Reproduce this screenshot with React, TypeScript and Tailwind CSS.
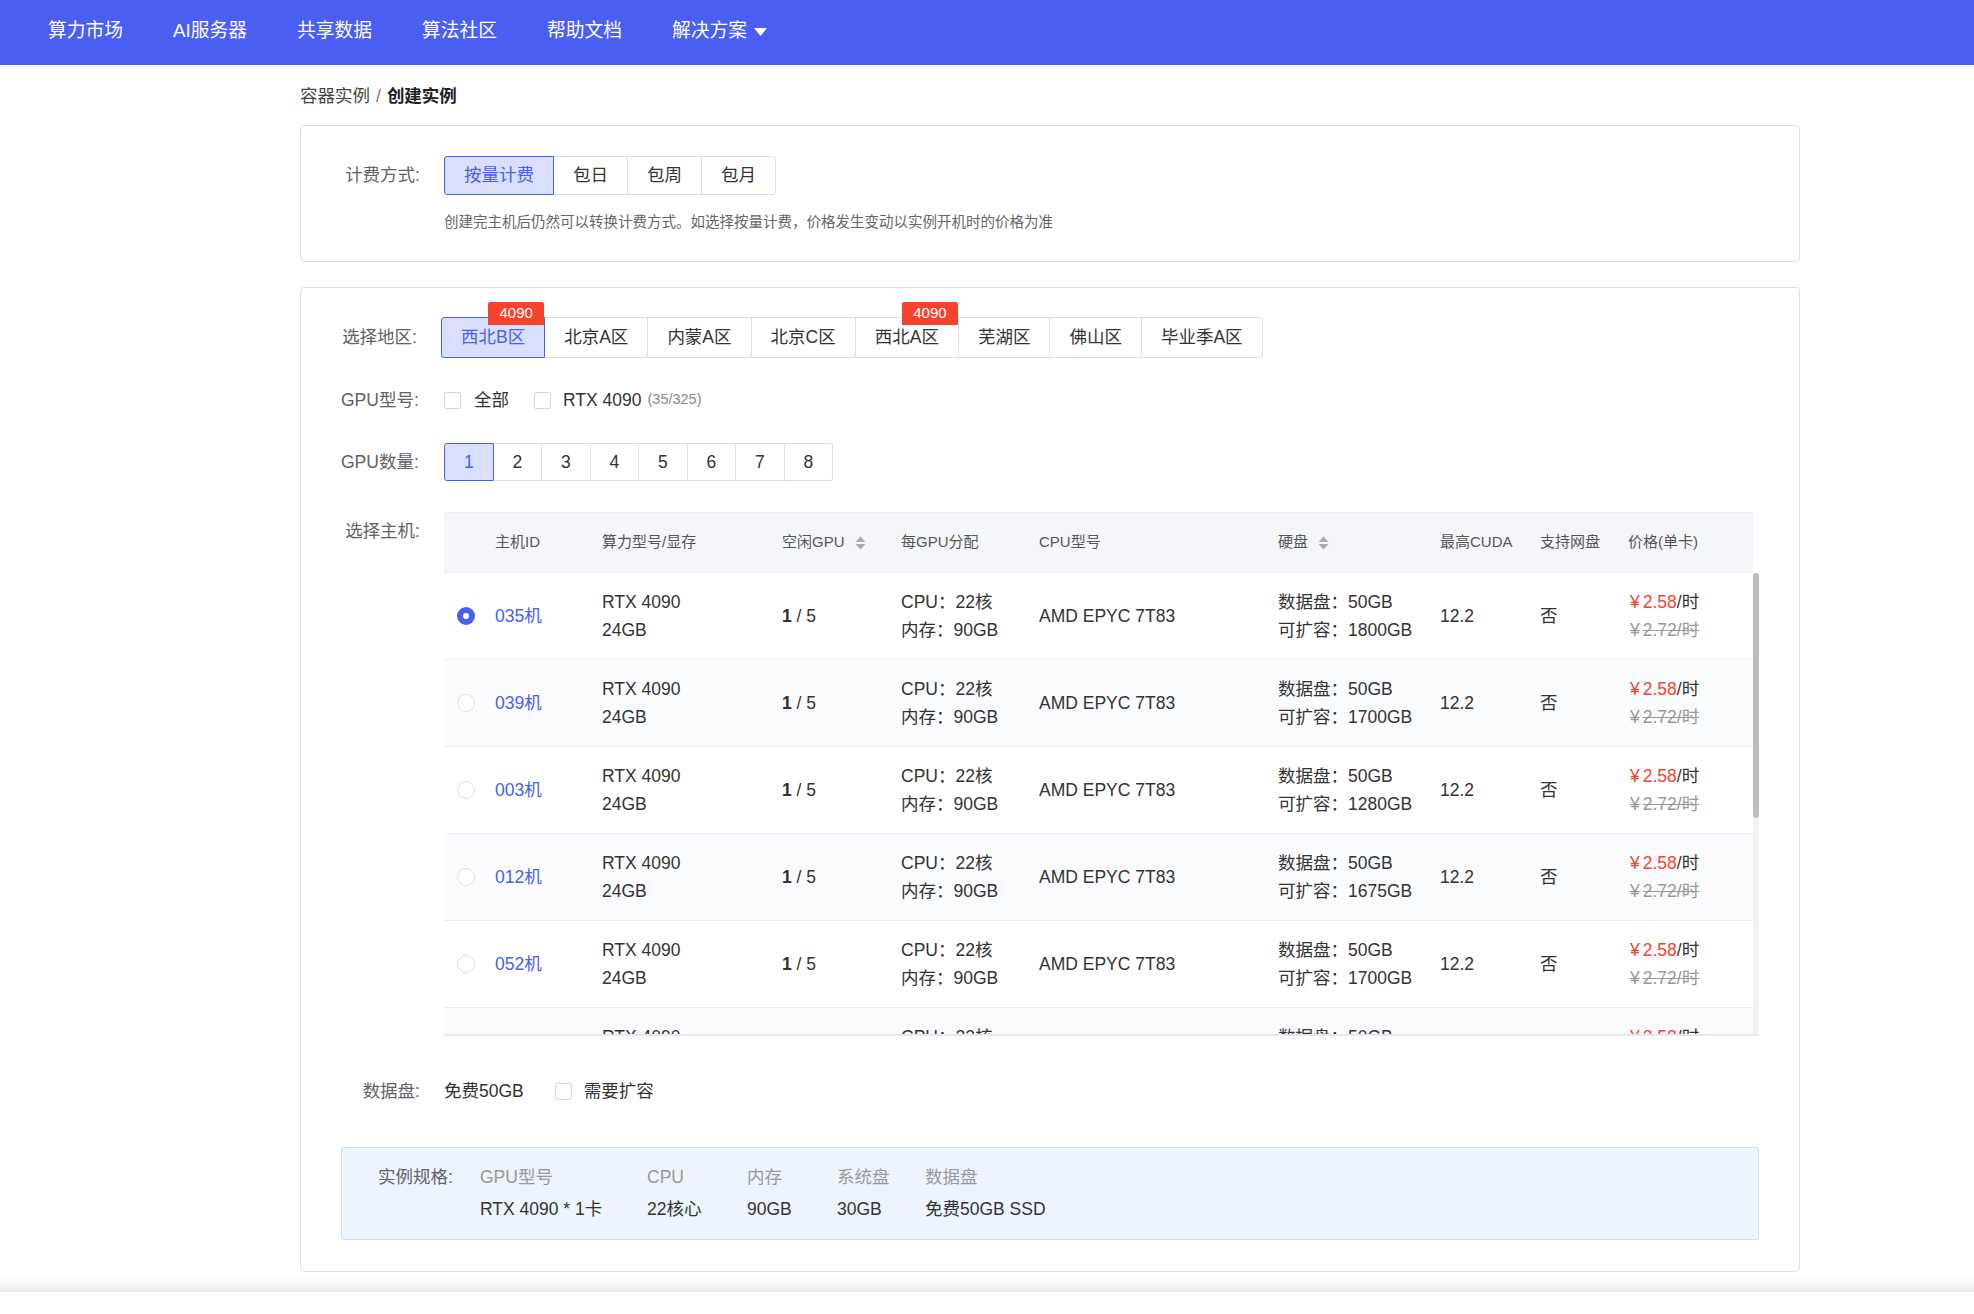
import React from "react";

const NAV = ["算力市场", "AI服务器", "共享数据", "算法社区", "帮助文档"];
const PAY = ["按量计费", "包日", "包周", "包月"];
const REGIONS = [
    { name: "西北B区", badge: true },
    { name: "北京A区" },
    { name: "内蒙A区" },
    { name: "北京C区" },
    { name: "西北A区", badge: true },
    { name: "芜湖区" },
    { name: "佛山区" },
    { name: "毕业季A区" },
];

const HOSTS = [
    { id: "035机", ext: "1800GB" },
    { id: "039机", ext: "1700GB" },
    { id: "003机", ext: "1280GB" },
    { id: "012机", ext: "1675GB" },
    { id: "052机", ext: "1700GB" },
    { id: "018机", ext: "1600GB" },
    { id: "027机", ext: "1500GB" },
];

const COLS = "grid grid-cols-[51px_107px_180px_119px_138px_239px_162px_100px_88px_125px]";
const SPEC = "grid grid-cols-[102px_167px_100px_90px_88px_1fr]";

function SortIcon() {
    return (
        <svg width="11" height="16" viewBox="0 0 11 16" className="ml-[10px]">
            <polygon points="0.5,7 5.5,1.5 10.5,7" fill="#a9abb0" />
            <polygon points="0.5,9 5.5,14.5 10.5,9" fill="#a9abb0" />
        </svg>
    );
}

function Checkbox() {
    return <span className="inline-block h-[17px] w-[17px] shrink-0 rounded-[2px] border border-[#d4d7de] bg-white" />;
}

function Radio({ on }: { on: boolean }) {
    return on ? (
        <span className="flex h-[18px] w-[18px] items-center justify-center rounded-full bg-[#4a5ef1]">
            <span className="h-[6px] w-[6px] rounded-full bg-white" />
        </span>
    ) : (
        <span className="block h-[18px] w-[18px] rounded-full border border-[#dcdfe6] bg-white" />
    );
}

export default function App() {
    return (
        <div className="min-h-[1314px] bg-white font-['Liberation_Sans','Noto_Sans_CJK_SC',sans-serif] text-[#333]">
            <nav className="flex h-[65px] items-center gap-[50px] bg-[#4a5ef1] pb-[2px] pl-[48px] text-[18.75px] text-white">
                {NAV.map((n) => (
                    <span key={n}>{n}</span>
                ))}
                <span className="flex items-center gap-[7px]">
                    解决方案
                    <svg width="13" height="8" viewBox="0 0 13 8">
                        <polygon points="0,0 13,0 6.5,8" fill="white" />
                    </svg>
                </span>
            </nav>

            <main className="ml-[300px] w-[1500px]">
                <div className="mt-[18px] h-[26px] text-[17.5px] leading-[26px]">
                    <span className="text-[#444]">容器实例</span>
                    <span className="mx-[6px] text-[#777]">/</span>
                    <span className="font-bold text-[#222]">创建实例</span>
                </div>

                <section className="mt-[16px] h-[137px] rounded-[4px] border border-[#dcdfe6] pt-[30px]">
                    <div className="flex items-center">
                        <div className="w-[119px] whitespace-nowrap text-right text-[17.5px] text-[#606266]">计费方式:</div>
                        <div className="ml-[24px] flex h-[39px]">
                            {PAY.map((p, i) => (
                                <span
                                    key={p}
                                    className={`flex items-center border px-[19px] text-[17.5px] ${i > 0 ? "-ml-px" : ""} ${i === 0 ? "z-10 rounded-l-[3px] border-[#4a5ef1] bg-[#dadffc] text-[#4a5ef1]" : "border-[#dcdfe6] bg-white"} ${i === PAY.length - 1 ? "rounded-r-[3px]" : ""}`}
                                >
                                    {p}
                                </span>
                            ))}
                        </div>
                    </div>
                    <p className="ml-[143px] mt-[17px] text-[14.5px] leading-[20px] text-[#666]">
                        创建完主机后仍然可以转换计费方式。如选择按量计费，价格发生变动以实例开机时的价格为准
                    </p>
                </section>

                <section className="mt-[25px] h-[985px] rounded-[4px] border border-[#dcdfe6] px-[40px] pt-[29px]">
                    <div className="flex items-center">
                        <div className="w-[76px] whitespace-nowrap text-right text-[17.5px] text-[#606266]">选择地区:</div>
                        <div className="ml-[24px] flex h-[41px]">
                            {REGIONS.map((r, i) => (
                                <span
                                    key={r.name}
                                    className={`relative flex items-center border px-[19px] text-[17.5px] ${i > 0 ? "-ml-px" : ""} ${i === 0 ? "z-10 rounded-l-[3px] border-[#4a5ef1] bg-[#dadffc] text-[#4a5ef1]" : "border-[#dcdfe6] bg-white"} ${i === REGIONS.length - 1 ? "rounded-r-[3px]" : ""}`}
                                >
                                    {r.name}
                                    {r.badge && (
                                        <span className="absolute right-0 top-[-16px] flex h-[23px] w-[56px] items-center justify-center rounded-t-[2px] bg-[#f4442e] text-[15px] text-white">
                                            4090
                                        </span>
                                    )}
                                </span>
                            ))}
                        </div>
                    </div>

                    <div className="mt-[30px] flex h-[24px] items-center">
                        <div className="w-[76px] whitespace-nowrap text-right text-[17.5px] text-[#606266]">GPU型号:</div>
                        <div className="ml-[27px] flex items-center text-[17.5px]">
                            <Checkbox />
                            <span className="ml-[13px]">全部</span>
                            <span className="ml-[25px] flex">
                                <Checkbox />
                            </span>
                            <span className="ml-[12px]">RTX 4090</span>
                            <span className="ml-[6px] text-[14.5px] text-[#888]">(35/325)</span>
                        </div>
                    </div>

                    <div className="mt-[31px] flex items-center">
                        <div className="w-[76px] whitespace-nowrap text-right text-[17.5px] text-[#606266]">GPU数量:</div>
                        <div className="ml-[27px] flex h-[38px]">
                            {[1, 2, 3, 4, 5, 6, 7, 8].map((n, i) => (
                                <span
                                    key={n}
                                    className={`flex w-[49.5px] items-center justify-center border text-[17.5px] ${i > 0 ? "-ml-px" : ""} ${i === 0 ? "z-10 rounded-l-[3px] border-[#4a5ef1] bg-[#dadffc] text-[#4a5ef1]" : "border-[#dcdfe6] bg-white"} ${i === 7 ? "rounded-r-[3px]" : ""}`}
                                >
                                    {n}
                                </span>
                            ))}
                        </div>
                    </div>

                    <div className="mt-[31px] flex">
                        <div className="w-[79px] whitespace-nowrap pt-[7px] text-right text-[17.5px] leading-[24px] text-[#606266]">选择主机:</div>
                        <div className="ml-[24px] w-[1315px]">
                            <div className={`${COLS} h-[61px] w-[1309px] items-center border-y border-[#ebeef5] bg-[#f5f6fa] text-[15px] text-[#555]`}>
                                <span />
                                <span>主机ID</span>
                                <span>算力型号/显存</span>
                                <span className="flex items-center">
                                    空闲GPU
                                    <SortIcon />
                                </span>
                                <span>每GPU分配</span>
                                <span>CPU型号</span>
                                <span className="flex items-center">
                                    硬盘
                                    <SortIcon />
                                </span>
                                <span>最高CUDA</span>
                                <span>支持网盘</span>
                                <span>价格(单卡)</span>
                            </div>
                            <div className="flex h-[463px] overflow-hidden border-b-2 border-[#e6e8ee]">
                                <div className="w-[1309px]">
                                    {HOSTS.map((h, i) => (
                                        <div
                                            key={h.id}
                                            className={`${COLS} h-[87px] items-center border-b border-[#ebeef5] text-[17.5px] leading-[28px] ${i % 2 === 1 ? "bg-[#fafbfd]" : "bg-white"}`}
                                        >
                                            <span className="pl-[13px]">
                                                <Radio on={i === 0} />
                                            </span>
                                            <span className="text-[#4a5ef1]">{h.id}</span>
                                            <span>
                                                RTX 4090
                                                <br />
                                                24GB
                                            </span>
                                            <span>
                                                <b>1</b> / 5
                                            </span>
                                            <span>
                                                CPU：22核
                                                <br />
                                                内存：90GB
                                            </span>
                                            <span>AMD EPYC 7T83</span>
                                            <span>
                                                数据盘：50GB
                                                <br />
                                                可扩容：{h.ext}
                                            </span>
                                            <span>12.2</span>
                                            <span>否</span>
                                            <span className="whitespace-nowrap pl-[2px]">
                                                <span className="text-[#f4442e]">
                                                    <span className="mr-[3px]">¥</span>2.58
                                                </span>
                                                /时
                                                <br />
                                                <span className="text-[#999] line-through">
                                                    <span className="mr-[3px]">¥</span>2.72/时
                                                </span>
                                            </span>
                                        </div>
                                    ))}
                                </div>
                                <div className="w-[6px] bg-[#f3f3f3]">
                                    <div className="h-[245px] rounded-[3px] bg-[#bdbdbd]" />
                                </div>
                            </div>
                        </div>
                    </div>

                    <div className="mt-[43px] flex h-[24px] items-center text-[17.5px]">
                        <div className="w-[79px] whitespace-nowrap text-right text-[#606266]">数据盘:</div>
                        <span className="ml-[24px]">免费50GB</span>
                        <span className="ml-[31px] flex">
                            <Checkbox />
                        </span>
                        <span className="ml-[12px]">需要扩容</span>
                    </div>

                    <div className="mt-[44px] h-[93px] rounded-[2px] border border-[#cfe0f5] bg-[#edf4fe] pl-[36px] pt-[17px] text-[17.5px] leading-[24px]">
                        <div className={SPEC}>
                            <span className="text-[#606266]">实例规格:</span>
                            <span className="text-[#999]">GPU型号</span>
                            <span className="text-[#999]">CPU</span>
                            <span className="text-[#999]">内存</span>
                            <span className="text-[#999]">系统盘</span>
                            <span className="text-[#999]">数据盘</span>
                        </div>
                        <div className={`${SPEC} mt-[8px]`}>
                            <span />
                            <span>RTX 4090 * 1卡</span>
                            <span>22核心</span>
                            <span>90GB</span>
                            <span>30GB</span>
                            <span>免费50GB SSD</span>
                        </div>
                    </div>
                </section>
            </main>

            <div className="mt-[5px] h-[15px] bg-linear-to-b from-white to-[#ececf0]" />
        </div>
    );
}
